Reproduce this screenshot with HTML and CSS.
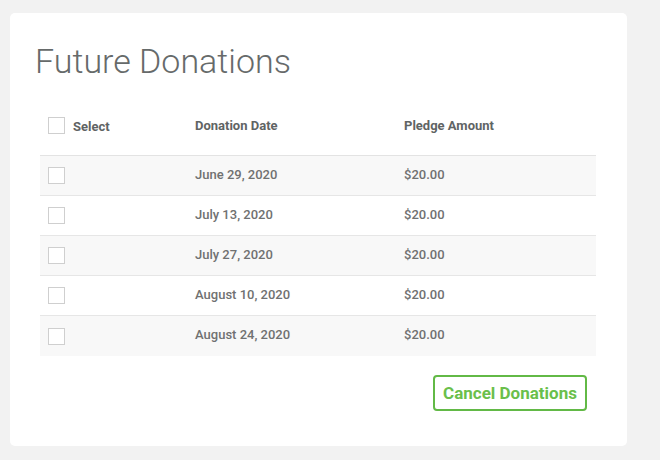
FILE: index.html
```html
<!DOCTYPE html>
<html>
<head>
<meta charset="utf-8">
<link rel="stylesheet" href="styles.css">
</head>
<body>
<div class="card">
  <h1 class="title">Future Donations</h1>
  <table class="donations">
    <thead>
      <tr>
        <th class="c-sel"><span class="cb"></span><span class="sel-label">Select</span></th>
        <th class="c-date">Donation Date</th>
        <th class="c-amt">Pledge Amount</th>
      </tr>
    </thead>
    <tbody>
      <tr class="odd"><td class="c-sel"><span class="cb"></span></td><td>June 29, 2020</td><td>$20.00</td></tr>
      <tr><td class="c-sel"><span class="cb"></span></td><td>July 13, 2020</td><td>$20.00</td></tr>
      <tr class="odd"><td class="c-sel"><span class="cb"></span></td><td>July 27, 2020</td><td>$20.00</td></tr>
      <tr><td class="c-sel"><span class="cb"></span></td><td>August 10, 2020</td><td>$20.00</td></tr>
      <tr class="odd last"><td class="c-sel"><span class="cb"></span></td><td>August 24, 2020</td><td>$20.00</td></tr>
    </tbody>
  </table>
  <div class="actions">
    <button class="cancel">Cancel Donations</button>
  </div>
</div>
</body>
</html>
```
FILE: styles.css
```css
html, body {
  margin: 0;
  padding: 0;
  background: #f2f2f2;
  font-family: Roboto, "Liberation Sans", sans-serif;
}
body {
  padding: 13px 0 0 10px;
}
.card {
  box-sizing: border-box;
  width: 617px;
  height: 433px;
  background: #fff;
  border-radius: 5px;
  padding: 28px 31px 0 30px;
}
.title {
  margin: 0 0 0 -5px;
  font-weight: 300;
  font-size: 34px;
  line-height: 40px;
  color: #666a6a;
}
.donations {
  margin-top: 23px;
  width: 556px;
  border-collapse: collapse;
  table-layout: fixed;
}
.donations th {
  text-align: left;
  font-size: 13px;
  font-weight: 700;
  color: #5f6464;
  height: 30px;
  padding: 6px 8px 15px;
  vertical-align: middle;
  border-bottom: 1px solid #e3e3e3;
}
.donations th.c-sel { width: 131px; }
.donations th.c-date { width: 193px; }
.donations td {
  font-size: 13px;
  font-weight: 500;
  color: #707171;
  height: 36px;
  padding: 0 8px 3px;
  vertical-align: middle;
  border-bottom: 1px solid #e6e6e6;
}
.donations tr.last td { border-bottom: none; height: 37px; }
.donations tr.odd td { background: #f8f8f8; }
.cb {
  display: inline-block;
  box-sizing: border-box;
  width: 17px;
  height: 17px;
  border: 1px solid #cfcfcf;
  background: #fff;
  vertical-align: middle;
}
.donations td .cb { margin-top: 3px; }
.sel-label {
  display: inline-block;
  margin-left: 8px;
  vertical-align: middle;
  margin-top: 2px;
}
.actions {
  display: flex;
  justify-content: flex-end;
  margin-top: 19px;
  padding-right: 9px;
}
.cancel {
  font-family: Roboto, "Liberation Sans", sans-serif;
  font-size: 17px;
  font-weight: 700;
  color: #6abf4b;
  background: #fff;
  border: 2px solid #62b946;
  border-radius: 4px;
  height: 36px;
  width: 154px;
  padding: 0;
  cursor: pointer;
}
```
